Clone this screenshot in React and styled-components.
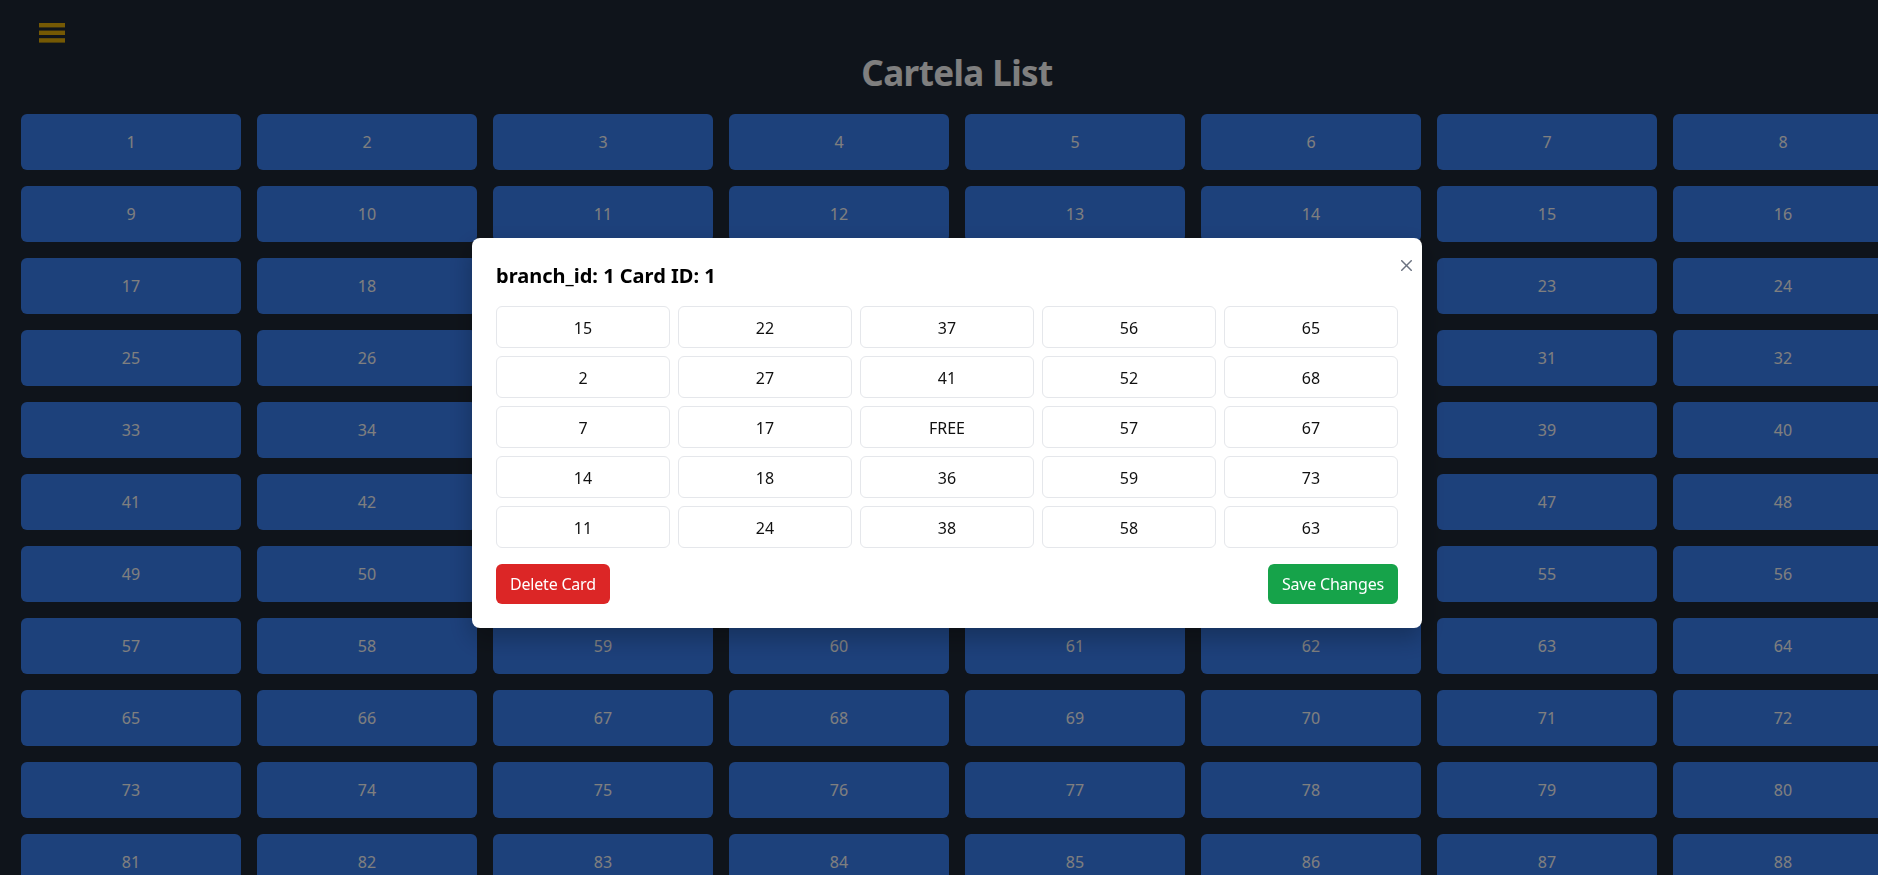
import React from "react";
import styled, { createGlobalStyle } from "styled-components";

const GlobalStyle = createGlobalStyle`
  html, body {
    margin: 0;
    padding: 0;
    overflow: hidden;
    background: #1f2937;
  }
  body {
    font-family: "Segoe UI", "Noto Sans", "Open Sans", sans-serif;
    width: 1878px;
    height: 875px;
  }
  #root {
    height: 875px;
    overflow: hidden;
  }
  * { box-sizing: border-box; }
`;

const Page = styled.div`
  width: max-content;
  min-height: 875px;
  padding: 0 21px 24px 21px;
  background: #1f2937;
`;

const TopBar = styled.div`
  display: flex;
  align-items: center;
  padding: 23px 0 0 18px;
  height: 43px;
`;

const MenuButton = styled.button`
  display: flex;
  padding: 0;
  border: none;
  background: transparent;
  color: #eab308;
  cursor: pointer;
`;

const Title = styled.h1`
  margin: 10px 0 21px;
  text-align: center;
  font-size: 35px;
  line-height: 40px;
  font-weight: 700;
  letter-spacing: -0.6px;
  color: #ffffff;
`;

const CardGrid = styled.div`
  display: grid;
  grid-template-columns: repeat(8, 220px);
  gap: 16px;
`;

const CardTile = styled.div`
  height: 56px;
  display: flex;
  align-items: center;
  justify-content: center;
  background: #3b82f6;
  border-radius: 6px;
  color: #ffffff;
  font-size: 16px;
  line-height: 24px;
`;

const Overlay = styled.div`
  position: fixed;
  inset: 0;
  background: rgba(0, 0, 0, 0.5);
  display: flex;
  align-items: center;
  justify-content: center;
  padding: 0 0 9px 16px;
`;

const Modal = styled.div`
  position: relative;
  width: 950px;
  background: #ffffff;
  border-radius: 8px;
  padding: 24px;
  box-shadow: 0 10px 25px rgba(0, 0, 0, 0.25);
`;

const CloseButton = styled.button`
  position: absolute;
  top: 22px;
  right: 10px;
  display: flex;
  padding: 0;
  border: none;
  background: transparent;
  color: #6b7280;
  cursor: pointer;
`;

const ModalTitle = styled.h2`
  margin: 0 0 16px;
  font-size: 20px;
  line-height: 28px;
  font-weight: 700;
  color: #000000;
`;

const NumberGrid = styled.div`
  display: grid;
  grid-template-columns: repeat(5, 1fr);
  gap: 8px;
`;

const NumberCell = styled.div`
  height: 42px;
  display: flex;
  align-items: center;
  justify-content: center;
  padding-top: 1px;
  border: 1px solid #e5e7eb;
  border-radius: 6px;
  font-size: 16px;
  color: #111111;
`;

const Actions = styled.div`
  display: flex;
  justify-content: space-between;
  margin-top: 16px;
`;

const ActionButton = styled.button`
  height: 40px;
  padding: 0 14px;
  border: none;
  border-radius: 6px;
  font-family: inherit;
  font-size: 16px;
  line-height: 24px;
  letter-spacing: -0.2px;
  color: #ffffff;
  background: ${(p) => (p.$variant === "danger" ? "#dc2626" : "#16a34a")};
  cursor: pointer;
`;

const cardNumbers = [
  [15, 22, 37, 56, 65],
  [2, 27, 41, 52, 68],
  [7, 17, "FREE", 57, 67],
  [14, 18, 36, 59, 73],
  [11, 24, 38, 58, 63],
];

const HamburgerIcon = () => (
  <svg width="26" height="20" viewBox="0 0 26 20" fill="currentColor">
    <rect x="0" y="0" width="26" height="4.4" />
    <rect x="0" y="7.6" width="26" height="4.4" />
    <rect x="0" y="15.2" width="26" height="4.4" />
  </svg>
);

const CloseIcon = () => (
  <svg width="11" height="11" viewBox="0 0 11 11" stroke="currentColor" strokeWidth="1.5" strokeLinecap="round">
    <line x1="0.75" y1="0.75" x2="10.25" y2="10.25" />
    <line x1="10.25" y1="0.75" x2="0.75" y2="10.25" />
  </svg>
);

export default function App() {
  const cards = Array.from({ length: 88 }, (_, i) => i + 1);
  return (
    <>
      <GlobalStyle />
      <Page>
        <TopBar>
          <MenuButton aria-label="menu">
            <HamburgerIcon />
          </MenuButton>
        </TopBar>
        <Title>Cartela List</Title>
        <CardGrid>
          {cards.map((n) => (
            <CardTile key={n}>{n}</CardTile>
          ))}
        </CardGrid>
      </Page>
      <Overlay>
        <Modal>
          <CloseButton aria-label="close">
            <CloseIcon />
          </CloseButton>
          <ModalTitle>branch_id: 1 Card ID: 1</ModalTitle>
          <NumberGrid>
            {cardNumbers.flat().map((v, i) => (
              <NumberCell key={i}>{v}</NumberCell>
            ))}
          </NumberGrid>
          <Actions>
            <ActionButton $variant="danger">Delete Card</ActionButton>
            <ActionButton $variant="success">Save Changes</ActionButton>
          </Actions>
        </Modal>
      </Overlay>
    </>
  );
}
